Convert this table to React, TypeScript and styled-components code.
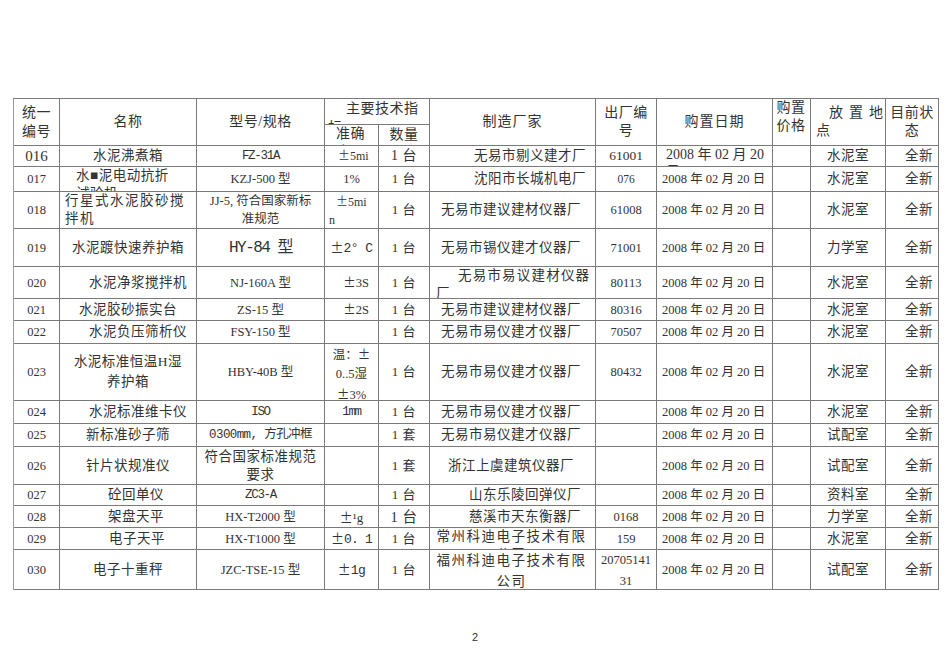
import styled, { createGlobalStyle } from "styled-components";

const LINE = "#7a7a7a";

const GlobalStyle = createGlobalStyle`
  body {
    margin: 0;
    background: #ffffff;
  }
`;

type Face = "cn" | "sm" | "mono";

const faces: Record<Face, { family: string; size: number; ls: number }> = {
  cn: { family: `"Liberation Serif", "Noto Sans CJK SC", serif`, size: 13.5, ls: 0.5 },
  sm: { family: `"Liberation Serif", "Noto Sans CJK SC", serif`, size: 12.5, ls: 0 },
  mono: { family: `"Liberation Mono", "Noto Sans CJK SC", monospace`, size: 12.5, ls: -1.3 },
};

type Spec = {
  t: string;
  a?: "l" | "c" | "r";
  pl?: number;
  pr?: number;
  v?: "t" | "c" | "b";
  f?: Face;
  fs?: number;
  ls?: number;
  ind?: number;
  lh?: number;
  span?: number;
  rows?: number;
};

const Page = styled.div`
  width: 950px;
  height: 672px;
  padding-top: 98px;
  box-sizing: border-box;
  display: flex;
  flex-direction: column;
`;

const Sheet = styled.div<{ $rows: string }>`
  display: grid;
  grid-template-columns: 46px 137px 128px 54px 51px 166px 61px 116px 38px 75px 53px;
  grid-template-rows: ${(p) => p.$rows};
  width: max-content;
  margin-left: 13px;
  border-top: 1px solid ${LINE};
  border-left: 1px solid #9a9a9a;
`;

const Cell = styled.div<{
  $a: string;
  $pl: number;
  $pr: number;
  $v: string;
  $f: Face;
  $fs?: number;
  $ls?: number;
  $ind: number;
  $lh: number;
  $span: number;
  $rows: number;
}>`
  box-sizing: border-box;
  grid-column: span ${(p) => p.$span};
  grid-row: span ${(p) => p.$rows};
  border-right: 1px solid ${LINE};
  border-bottom: 1px solid ${LINE};
  overflow: hidden;
  display: flex;
  flex-direction: column;
  justify-content: ${(p) =>
    p.$v === "t" ? "flex-start" : p.$v === "b" ? "flex-end" : "safe center"};
  padding: 0 ${(p) => p.$pr}px 0 ${(p) => p.$pl}px;
  text-align: ${(p) => (p.$a === "l" ? "left" : p.$a === "r" ? "right" : "center")};
  text-indent: ${(p) => p.$ind}px;
  white-space: pre;
  font-family: ${(p) => faces[p.$f].family};
  font-size: ${(p) => p.$fs ?? faces[p.$f].size}px;
  letter-spacing: ${(p) => p.$ls ?? faces[p.$f].ls}px;
  line-height: ${(p) => p.$lh}px;
  color: #333;
`;

// full-width plus-minus, like the CJK fonts of the original sheet
const Pm = styled.span`
  font-family: "Noto Sans CJK SC", sans-serif;
  font-feature-settings: "fwid" 1;
  letter-spacing: 0;
`;

const PageNo = styled.div`
  margin-top: 41px;
  text-align: center;
  font-family: "Liberation Sans", Arial, sans-serif;
  font-size: 11px;
  line-height: 12px;
  color: #333;
`;

const colDefaults: Partial<Spec>[] = [
  { a: "c", f: "sm" },
  { a: "c", f: "cn" },
  { a: "c", f: "sm" },
  { a: "c", f: "sm" },
  { a: "c", f: "cn", fs: 13 },
  { a: "l", pl: 11, f: "cn" },
  { a: "c", f: "sm" },
  { a: "l", pl: 5, f: "sm" },
  { a: "c", f: "cn" },
  { a: "c", f: "cn" },
  { a: "r", pr: 5, f: "cn" },
];

const header: Spec[] = [
  { t: "统一\n编号", rows: 2, fs: 14, lh: 19 },
  { t: "名称", rows: 2, fs: 14 },
  { t: "型号/规格", rows: 2, fs: 14 },
  { t: "主要技术指\n标", span: 2, a: "l", pl: 3, ind: 18, v: "t", fs: 14, lh: 19 },
  { t: "制造厂家", rows: 2, fs: 14, ls: 1 },
  { t: "出厂编\n号", rows: 2, fs: 14 },
  { t: "购置日期", rows: 2, fs: 14, ls: 1 },
  { t: "购置\n价格", rows: 2, fs: 14, v: "t", pl: 1 },
  { t: "放置地\n点", rows: 2, a: "l", pl: 5, ind: 13, ls: 6, fs: 14 },
  { t: "目前状\n态", rows: 2, fs: 14 },
  { t: "准确\n度", a: "l", pl: 11, v: "t", fs: 14 },
  { t: "数量", fs: 14 },
];

const D = "2008 年 02 月 20 日";

type Row = { h: number; c: (string | Spec)[] };

const rows: Row[] = [
  {
    h: 21,
    c: [
      { t: "016", fs: 15 },
      "水泥沸煮箱",
      { t: "FZ-31A", f: "mono" },
      { t: "±5mi\nn", a: "l", pl: 13, fs: 12 },
      { t: "1 台", fs: 14 },
      { t: "无易市剔义建才厂", pl: 44 },
      { t: "61001", fs: 13.5 },
      { t: "2008 年 02 月 20\n日", fs: 14, pl: 9, lh: 17 },
      "",
      "水泥室",
      "全新",
    ],
  },
  {
    h: 25,
    c: [
      "017",
      { t: "水■泥电动抗折\n试验机", a: "l", pl: 16 },
      "KZJ-500 型",
      "1%",
      "1 台",
      { t: "沈阳市长城机电厂", pl: 44 },
      { t: "076", fs: 11.5 },
      D,
      "",
      "水泥室",
      "全新",
    ],
  },
  {
    h: 37,
    c: [
      "018",
      { t: "行星式水泥胶砂搅\n拌机", a: "l", pl: 5, ls: 1.5 },
      "JJ-5, 符合国家新标\n准规范",
      { t: "±5mi\nn", a: "l", pl: 4, ind: 7, fs: 12 },
      "1 台",
      "无易市建议建材仪器厂",
      "61008",
      D,
      "",
      "水泥室",
      "全新",
    ],
  },
  {
    h: 38,
    c: [
      "019",
      "水泥踱快速养护箱",
      { t: "HY-84 型", f: "mono", fs: 16, ls: -1.5 },
      { t: "±2° C", f: "mono", fs: 13, ls: -0.5 },
      "1 台",
      "无易市锡仪建才仪器厂",
      "71001",
      D,
      "",
      "力学室",
      "全新",
    ],
  },
  {
    h: 32,
    c: [
      "020",
      { t: "水泥净浆搅拌机", a: "l", pl: 29 },
      "NJ-160A 型",
      { t: "±3S", a: "r", pr: 9 },
      "1 台",
      { t: "无易市易议建材仪器\n厂", pl: 6, ind: 22, ls: 1.2 },
      "80113",
      D,
      "",
      "水泥室",
      "全新",
    ],
  },
  {
    h: 22,
    c: [
      "021",
      { t: "水泥胶砂振实台", a: "l", pl: 19 },
      "ZS-15 型",
      { t: "±2S", a: "r", pr: 9 },
      "1 台",
      "无易市建议建材仪器厂",
      "80316",
      D,
      "",
      "水泥室",
      "全新",
    ],
  },
  {
    h: 23,
    c: [
      "022",
      { t: "水泥负压筛析仪", a: "l", pl: 29 },
      "FSY-150 型",
      "",
      "1 台",
      "无易市易仪建才仪器厂",
      "70507",
      D,
      "",
      "水泥室",
      "全新",
    ],
  },
  {
    h: 57,
    c: [
      "023",
      { t: "水泥标准恒温H湿\n养护箱", lh: 20 },
      "HBY-40B 型",
      { t: "温：±\n0..5湿\n±3%", lh: 19 },
      "1 台",
      "无易市易仪建才仪器厂",
      "80432",
      D,
      "",
      "水泥室",
      "全新",
    ],
  },
  {
    h: 23,
    c: [
      "024",
      { t: "水泥标准维卡仪", a: "l", pl: 29 },
      { t: "ISO", f: "mono" },
      { t: "1mm", f: "mono" },
      "1 台",
      "无易市易仪建才仪器厂",
      "",
      D,
      "",
      "水泥室",
      "全新",
    ],
  },
  {
    h: 23,
    c: [
      "025",
      "新标准砂子筛",
      { t: "0300mm, 方孔冲框", f: "mono", ls: -0.6 },
      "",
      "1 套",
      "无易市易仪建才仪器厂",
      "",
      D,
      "",
      "试配室",
      "全新",
    ],
  },
  {
    h: 38,
    c: [
      "026",
      "针片状规准仪",
      { t: "符合国家标准规范\n要求", f: "cn" },
      "",
      "1 套",
      { t: "浙江上虞建筑仪器厂", pl: 18 },
      "",
      D,
      "",
      "试配室",
      "全新",
    ],
  },
  {
    h: 21,
    c: [
      "027",
      { t: "砼回单仪", a: "l", pl: 48 },
      { t: "ZC3-A", f: "mono" },
      "",
      "1 台",
      { t: "山东乐陵回弹仪厂", pl: 39 },
      "",
      D,
      "",
      "资料室",
      "全新",
    ],
  },
  {
    h: 22,
    c: [
      "028",
      { t: "架盘天平", a: "l", pl: 48 },
      "HX-T2000 型",
      { t: "±¹g", v: "b", fs: 13 },
      { t: "1 台", fs: 14.5 },
      { t: "慈溪市天东衡器厂", pl: 39 },
      "0168",
      D,
      "",
      "力学室",
      "全新",
    ],
  },
  {
    h: 22,
    c: [
      "029",
      { t: "电子天平", a: "l", pl: 49 },
      "HX-T1000 型",
      { t: "±0. 1", f: "mono", fs: 13, ls: -0.8 },
      "1 台",
      { t: "常州科迪电子技术有限\n公司", a: "c", pl: 0, ls: 1.5 },
      "159",
      D,
      "",
      "水泥室",
      "全新",
    ],
  },
  {
    h: 40,
    c: [
      "030",
      "电子十重秤",
      "JZC-TSE-15 型",
      { t: "±1g", f: "mono", fs: 13, ls: -0.5 },
      "1 台",
      { t: "福州科迪电子技术有限\n公司", a: "c", pl: 0, ls: 1.5, lh: 21 },
      { t: "20705141\n31", lh: 21 },
      D,
      "",
      "试配室",
      "全新",
    ],
  },
];

function withPm(text: string) {
  const parts = text.split("±");
  return parts.map((part, i) => (
    <span key={i}>
      {i > 0 && <Pm>±</Pm>}
      {part}
    </span>
  ));
}

function renderCell(spec: Spec, key: string) {
  return (
    <Cell
      key={key}
      $a={spec.a ?? "c"}
      $pl={spec.pl ?? 2}
      $pr={spec.pr ?? 2}
      $v={spec.v ?? "c"}
      $f={spec.f ?? "cn"}
      $fs={spec.fs}
      $ls={spec.ls}
      $ind={spec.ind ?? 0}
      $lh={spec.lh ?? 18}
      $span={spec.span ?? 1}
      $rows={spec.rows ?? 1}
    >
      <div>{withPm(spec.t)}</div>
    </Cell>
  );
}

function App() {
  const template = ["26px", "21px", ...rows.map((r) => `${r.h}px`)].join(" ");

  return (
    <Page>
      <GlobalStyle />
      <Sheet $rows={template}>
        {header.map((h, i) => renderCell(h, `h${i}`))}
        {rows.map((row, r) =>
          row.c.map((c, i) => {
            const spec: Spec =
              typeof c === "string"
                ? { ...colDefaults[i], t: c }
                : { ...colDefaults[i], ...c };
            return renderCell(spec, `r${r}c${i}`);
          })
        )}
      </Sheet>
      <PageNo>2</PageNo>
    </Page>
  );
}

export default App;
